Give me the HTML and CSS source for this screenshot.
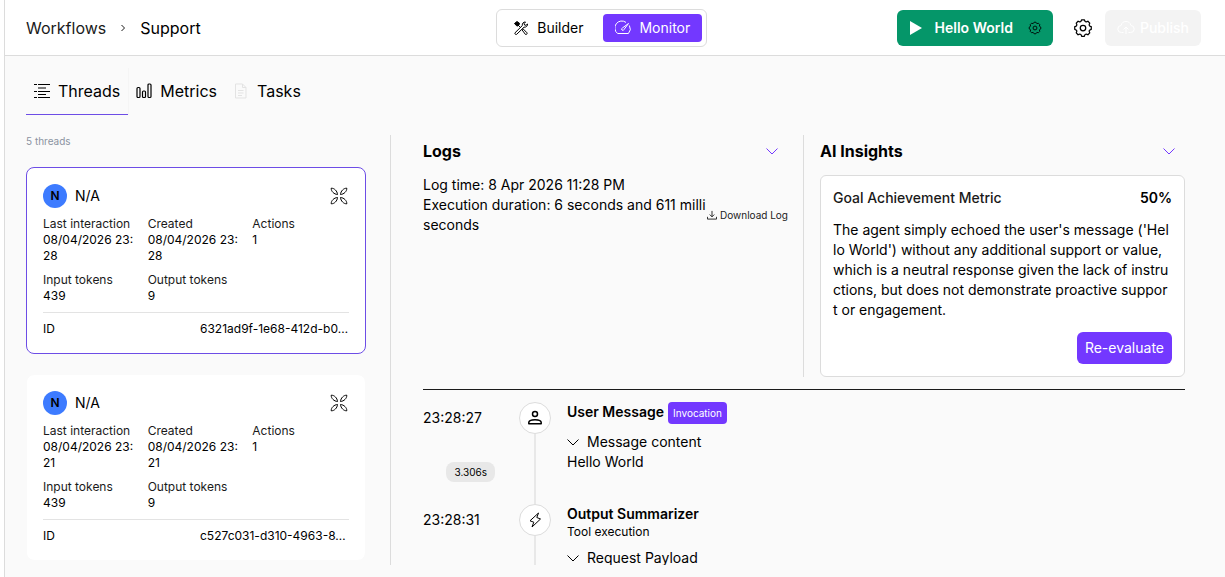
FILE: index.html
```html
<!DOCTYPE html>
<html lang="en">
<head>
    <meta charset="UTF-8">
    <meta name="viewport" content="width=device-width, initial-scale=1.0">
    <title>Support - Monitor</title>
    <link rel="stylesheet" href="styles.css">
</head>
<body>
    <!-- shared icons -->
    <svg class="sprite" aria-hidden="true">
        <symbol id="chevron" viewBox="0 0 12 12"><path d="M.5 3.500L6 9l5.500-5.500"/></symbol>
        <symbol id="gear" viewBox="0 0 24 24">
            <path d="M10.400 2.100h3.200Q14.500 5.900 17.900 3.900L20.100 6.100Q18.100 9.500 21.900 10.400v3.200Q18.100 14.500 20.100 17.900L17.900 20.100Q14.500 18.100 13.600 21.900h-3.200Q9.500 18.100 6.100 20.100L3.900 17.900Q5.900 14.500 2.100 13.600v-3.200Q5.900 9.500 3.900 6.100L6.100 3.900Q9.500 5.900 10.400 2.100z"/>
            <circle cx="12" cy="12" r="3.300"/>
        </symbol>
        <symbol id="agent" viewBox="0 0 20 20">
            <path id="petal" d="M2.200 2.200C5.200 2 8.300 5 8.500 8.500 5 8.300 2 5.200 2.200 2.200z"/>
            <use href="#petal" transform="rotate(90 10 10)"/>
            <use href="#petal" transform="rotate(180 10 10)"/>
            <use href="#petal" transform="rotate(270 10 10)"/>
        </symbol>
    </svg>

    <div class="page">
        <header class="header">
            <nav class="breadcrumb">
                <a href="#">Workflows</a>
                <svg class="icon crumb-arrow" viewBox="0 0 8 8"><path d="M2.500 1l3 3-3 3"/></svg>
                <a href="#" class="current">Support</a>
            </nav>

            <div class="switch">
                <button class="switch-btn">
                    <svg class="icon icon-16" viewBox="0 0 16 16">
                        <path class="solid" d="M1.500 3.500L4 1.500l2.500 1.800-.3 1.400L4.800 6l-1.300-.3z"/>
                        <path d="M5 5l2.500 2.500M9 9.800l1-1 4 4a1.200 1.200 0 0 1-1.600 1.600z"/>
                        <path d="M2 12.800L9.300 5.600C9 3.500 10.500 1.700 12.500 2l-1.300 1.500.3 1.500 1.500.3L14.500 4c.3 2-1.500 3.500-3.500 3.200L3.600 14.400A1.200 1.200 0 0 1 2 12.800z"/>
                    </svg>
                    Builder
                </button>
                <button class="switch-btn active">
                    <svg class="icon icon-16" viewBox="0 0 16 16">
                        <path d="M11 2.400A6.800 6.800 0 0 0 2.600 13.500h10.800a6.800 6.800 0 0 0 1-8"/>
                        <path d="M13.500 3.500L9 9.500A1.200 1.200 0 1 1 7.400 8z"/>
                    </svg>
                    Monitor
                </button>
            </div>

            <div class="actions">
                <div class="run">
                    <button class="run-btn">
                        <svg class="play" viewBox="0 0 12 14"><path d="M0 0l12 7-12 7z"/></svg>
                        Hello World
                    </button>
                    <button class="icon-btn" aria-label="Run settings"><svg class="icon icon-14 thick"><use href="#gear"/></svg></button>
                </div>
                <button class="icon-btn" aria-label="Settings"><svg class="icon icon-20 thick"><use href="#gear"/></svg></button>
                <button class="publish" disabled>
                    <svg class="icon icon-18" viewBox="0 0 18 18"><path d="M6.500 13.500H4.500a3.500 3.500 0 0 1-.4-7 5 5 0 0 1 9.800 0 3.500 3.500 0 0 1-.4 7h-2M9 15V8.500M6.500 10.500L9 8l2.500 2.500"/></svg>
                    Publish
                </button>
            </div>
        </header>

        <nav class="tabs">
            <button class="tab active">
                <svg class="icon icon-16" viewBox="0 0 16 16"><path d="M0 1.500h3M4 1.500h12M4 5h8M0 8.500h3M4 8.500h12M4 11.500h8M0 14.500h3M4 14.500h12"/></svg>
                Threads
            </button>
            <button class="tab">
                <svg class="icon icon-16 bars" viewBox="0 0 16 16"><rect x="1" y="4.500" width="3" height="10" rx="1"/><rect x="6.500" y="8" width="3" height="6.500" rx="1"/><rect x="12" y="1" width="3" height="13.500" rx="1"/></svg>
                Metrics
            </button>
            <button class="tab">
                <svg class="icon icon-16 faded" viewBox="0 0 16 16"><path d="M2.500 1h7l3.500 3.500V15H2.500zM9.500 1v3.500H13M5 7.500h5.500M5 10h5.500M5 12.500h4"/></svg>
                Tasks
            </button>
        </nav>

        <main class="content">
            <section class="threads">
                <p class="count">5 threads</p>
                <article class="card selected">
                    <div class="card-head">
                        <span class="avatar">N</span>
                        <span class="name">N/A</span>
                        <svg class="icon icon-20"><use href="#agent"/></svg>
                    </div>
                    <dl class="stats">
                        <div><dt>Last interaction</dt><dd>08/04/2026 23:28</dd></div>
                        <div><dt>Created</dt><dd>08/04/2026 23:28</dd></div>
                        <div><dt>Actions</dt><dd>1</dd></div>
                        <div><dt>Input tokens</dt><dd>439</dd></div>
                        <div><dt>Output tokens</dt><dd>9</dd></div>
                    </dl>
                    <div class="card-id"><span>ID</span><span class="id-value">6321ad9f-1e68-412d-b0…</span></div>
                </article>
                <article class="card">
                    <div class="card-head">
                        <span class="avatar">N</span>
                        <span class="name">N/A</span>
                        <svg class="icon icon-20"><use href="#agent"/></svg>
                    </div>
                    <dl class="stats">
                        <div><dt>Last interaction</dt><dd>08/04/2026 23:21</dd></div>
                        <div><dt>Created</dt><dd>08/04/2026 23:21</dd></div>
                        <div><dt>Actions</dt><dd>1</dd></div>
                        <div><dt>Input tokens</dt><dd>439</dd></div>
                        <div><dt>Output tokens</dt><dd>9</dd></div>
                    </dl>
                    <div class="card-id"><span>ID</span><span class="id-value">c527c031-d310-4963-8…</span></div>
                </article>
            </section>

            <section class="details">
                <div class="summary">
                    <div class="logs">
                        <div class="section-head">
                            <h2>Logs</h2>
                            <button class="toggle" aria-label="Collapse logs"><svg class="icon icon-12"><use href="#chevron"/></svg></button>
                        </div>
                        <div class="log-info">
                            <div class="log-text">
                                <p>Log time: 8 Apr 2026 11:28 PM</p>
                                <p>Execution duration: 6 seconds and 611 milliseconds</p>
                            </div>
                            <button class="download">
                                <svg class="icon icon-10" viewBox="0 0 11 11"><path d="M5.500 1v6.500M3 5l2.500 2.500L8 5M.5 7.500V10h10V7.500"/></svg>
                                Download Log
                            </button>
                        </div>
                    </div>
                    <div class="insights">
                        <div class="section-head">
                            <h2>AI Insights</h2>
                            <button class="toggle" aria-label="Collapse insights"><svg class="icon icon-12"><use href="#chevron"/></svg></button>
                        </div>
                        <div class="metric">
                            <div class="metric-head"><span>Goal Achievement Metric</span><strong>50%</strong></div>
                            <p class="metric-text">The agent simply echoed the user's message ('Hello World') without any additional support or value, which is a neutral response given the lack of instructions, but does not demonstrate proactive support or engagement.</p>
                            <button class="evaluate">Re-evaluate</button>
                        </div>
                    </div>
                </div>

                <div class="timeline">
                    <div class="step">
                        <div class="step-time">
                            <time>23:28:27</time>
                            <span class="duration">3.306s</span>
                        </div>
                        <div class="step-line">
                            <span class="dot"><svg class="icon icon-20 thick" viewBox="0 0 20 20"><circle cx="10" cy="6" r="2.500"/><path d="M3.800 15.800v-1.300c0-3.800 12.400-3.800 12.400 0v1.300z"/></svg></span>
                        </div>
                        <div class="step-body">
                            <div class="step-title"><h3>User Message</h3><span class="badge">Invocation</span></div>
                            <button class="expand"><svg class="icon icon-12"><use href="#chevron"/></svg>Message content</button>
                            <p>Hello World</p>
                        </div>
                    </div>
                    <div class="step">
                        <div class="step-time">
                            <time>23:28:31</time>
                        </div>
                        <div class="step-line">
                            <span class="dot"><svg class="icon icon-16" viewBox="0 0 16 16"><path d="M11.500 1L3 8.800l3.800 1.400L5 15l8.500-8-3.700-1.500z"/></svg></span>
                        </div>
                        <div class="step-body">
                            <h3>Output Summarizer</h3>
                            <p class="sub">Tool execution</p>
                            <button class="expand"><svg class="icon icon-12"><use href="#chevron"/></svg>Request Payload</button>
                        </div>
                    </div>
                </div>
            </section>
        </main>
    </div>
</body>
</html>
```
FILE: styles.css
```css
* {
    box-sizing: border-box;
}

body {
    margin: 0;
    font-family: Inter, "Liberation Sans", sans-serif;
    font-size: 14px;
    line-height: 20px;
    color: #000;
    background: #fff;
}

h2,
h3,
p,
dl,
dd {
    margin: 0;
}

button {
    display: flex;
    align-items: center;
    padding: 0;
    border: 0;
    background: none;
    font: inherit;
    color: inherit;
    white-space: nowrap;
    cursor: pointer;
}

a {
    color: inherit;
    text-decoration: none;
}

.page {
    display: flex;
    flex-direction: column;
    height: 100vh;
    margin-left: 4px;
    border-left: 1px solid #dcdcdc;
    background: #fafafa;
    overflow: hidden;
}

/* Icons */
.sprite {
    position: absolute;
    width: 0;
    height: 0;
}

.icon {
    flex: none;
    fill: none;
    stroke: currentColor;
    stroke-width: 1;
    stroke-linejoin: round;
}

.icon-10 { width: 10px; height: 10px; }
.icon-12 { width: 12px; height: 12px; }
.icon-14 { width: 14px; height: 14px; }
.icon-16 { width: 16px; height: 16px; }
.icon-18 { width: 18px; height: 18px; }
.icon-20 { width: 20px; height: 20px; }

.thick {
    stroke-width: 1.5;
}

.bars {
    stroke-width: 1.2;
}

.solid {
    fill: currentColor;
}

.faded {
    color: #e3e3e3;
}

/* Header */
.header {
    display: grid;
    grid-template-columns: 20fr auto 21fr;
    align-items: center;
    flex: none;
    height: 56px;
    padding: 0 24px 0 21px;
    background: #fff;
    border-bottom: 1px solid #dcdcdc;
}

.breadcrumb {
    display: flex;
    align-items: center;
    gap: 13px;
    font-size: 16px;
    color: #1a1a1a;
}

.crumb-arrow {
    width: 8px;
    height: 8px;
}

.current {
    color: #000;
}

.switch {
    display: flex;
    gap: 8px;
    padding: 4px;
    border: 1px solid #dcdcdc;
    border-radius: 6px;
}

.switch-btn {
    gap: 8px;
    height: 28px;
    padding: 0 12px;
    border-radius: 4px;
}

.switch-btn.active {
    background: #7338ff;
    color: #fff;
}

.actions {
    display: flex;
    align-items: center;
    justify-content: flex-end;
    gap: 12px;
}

.run {
    display: flex;
    align-items: center;
    gap: 15px;
    height: 36px;
    padding: 0 11px 0 13px;
    border-radius: 6px;
    background: #059669;
    margin-right: 8px;
}

.run-btn {
    gap: 13px;
    font-weight: 600;
    color: #fff;
}

.play {
    width: 12px;
    height: 14px;
    fill: #fff;
}

.publish {
    gap: 5px;
    height: 36px;
    padding: 0 12px;
    border-radius: 6px;
    background: #f3f3f3;
    color: #fff;
    font-weight: 500;
    cursor: default;
}

/* Tabs */
.tabs {
    display: flex;
    flex: none;
    padding: 12px 21px 0;
}

.tab {
    gap: 8px;
    height: 47px;
    padding: 0 8px;
    font-size: 16px;
    border-bottom: 1px solid transparent;
}

.tab.active {
    border-bottom-color: #6d4de6;
    box-shadow: 1px 0 0 #f5f5f5;
}

/* Threads list */
.content {
    display: flex;
    flex: 1;
    min-height: 0;
    margin: 20px 40px 12px 21px;
}

.threads {
    flex: none;
    width: 365px;
    padding-right: 24px;
    border-right: 1px solid #dcdcdc;
    overflow: hidden;
}

.count {
    margin-bottom: 20px;
    font-size: 10px;
    line-height: 12px;
    color: #8b93a1;
}

.card {
    margin-bottom: 20px;
    padding: 16px;
    border: 1px solid #fafafa;
    border-radius: 8px;
    background: #fff;
    font-size: 12px;
    line-height: 16px;
}

.card.selected {
    border-color: #6d4de6;
}

.card-head {
    display: flex;
    align-items: center;
    gap: 8px;
}

.avatar {
    width: 24px;
    height: 24px;
    border-radius: 50%;
    background: #3d7bff;
    font-weight: 600;
    line-height: 24px;
    text-align: center;
}

.name {
    flex: 1;
    font-size: 14px;
}

.stats {
    display: grid;
    grid-template-columns: repeat(3, 1fr);
    gap: 8px;
    margin: 8px 0;
}

.stats dt {
    color: #1a1a1a;
}

.stats dd {
    word-break: break-all;
}

.card-id {
    display: flex;
    justify-content: space-between;
    padding-top: 8px;
    border-top: 1px solid #e3e3e3;
}

.id-value {
    width: 149px;
    white-space: nowrap;
}

/* Logs and insights */
.details {
    flex: 1;
    min-width: 0;
    padding-left: 32px;
    overflow: hidden;
}

.summary {
    display: grid;
    grid-template-columns: 1fr 1fr;
    padding-bottom: 12px;
    border-bottom: 1px solid #1a1a1a;
}

.logs {
    padding-right: 15px;
    border-right: 1px solid #dcdcdc;
}

.insights {
    padding-left: 16px;
}

.section-head {
    display: flex;
    align-items: center;
    justify-content: space-between;
    height: 32px;
    margin-bottom: 8px;
}

.section-head h2 {
    font-size: 16px;
    font-weight: 700;
}

.toggle {
    padding: 10px;
    color: #7338ff;
}

.log-info {
    display: flex;
    align-items: flex-end;
}

.log-text {
    flex: 1;
    word-break: break-all;
}

.download {
    gap: 3px;
    height: 40px;
    font-size: 10px;
    color: #1a1a1a;
}

.metric {
    display: flex;
    flex-direction: column;
    gap: 12px;
    padding: 12px;
    border: 1px solid #dcdcdc;
    border-radius: 6px;
    background: #fff;
}

.metric-head {
    display: flex;
    justify-content: space-between;
    font-weight: 500;
    color: #1a1a1a;
}

.metric-head strong {
    font-weight: 600;
    color: #000;
}

.metric-text {
    word-break: break-all;
}

.evaluate {
    align-self: flex-end;
    height: 32px;
    padding: 0 8px;
    border-radius: 6px;
    background: #7338ff;
    color: #fff;
}

/* Timeline */
.timeline {
    padding-top: 12px;
}

.step {
    display: flex;
    min-height: 102px;
}

.step-time {
    display: flex;
    flex-direction: column;
    width: 72px;
    margin-right: 24px;
    line-height: 32px;
}

.duration {
    align-self: flex-end;
    margin-top: 28px;
    padding: 0 8px;
    border-radius: 8px;
    background: #e8e8e8;
    font-size: 10px;
    line-height: 20px;
}

.step-line {
    display: flex;
    flex-direction: column;
    align-items: center;
    margin-right: 16px;
}

.step-line::after {
    content: '';
    flex: 1;
    width: 2px;
    background: #e8e8e8;
}

.dot {
    display: flex;
    align-items: center;
    justify-content: center;
    width: 32px;
    height: 32px;
    border: 1px solid #dcdcdc;
    border-radius: 50%;
    background: #fff;
}

.step-title {
    display: flex;
    gap: 4px;
    height: 22px;
}

.step h3 {
    font-size: 14px;
    font-weight: 600;
}

.badge {
    padding: 0 5px;
    border-radius: 4px;
    background: #7338ff;
    color: #fff;
    font-size: 10px;
    line-height: 22px;
}

.sub {
    font-size: 12px;
    line-height: 16px;
}

.expand {
    gap: 8px;
    margin-top: 8px;
}
```
